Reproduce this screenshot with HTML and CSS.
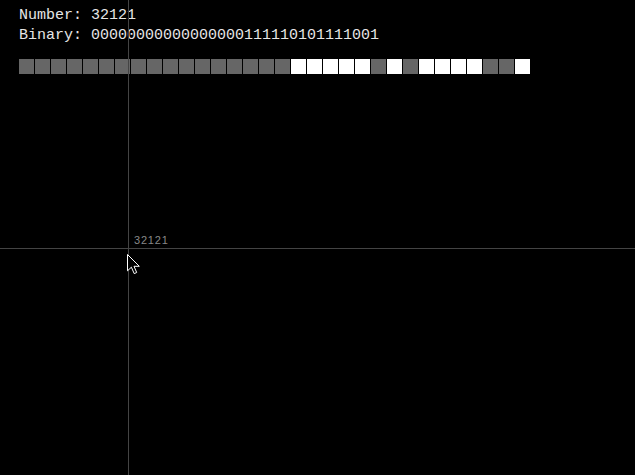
FILE: index.html
```html
<!DOCTYPE html>
<html>
<head>
<meta charset="utf-8">
<link rel="stylesheet" href="styles.css">
</head>
<body>
<div class="panel">
  <div class="line">Number: 32121</div>
  <div class="line">Binary: 00000000000000000111110101111001</div>
  <div class="bits">
    <span class="bit"></span><span class="bit"></span><span class="bit"></span><span class="bit"></span>
    <span class="bit"></span><span class="bit"></span><span class="bit"></span><span class="bit"></span>
    <span class="bit"></span><span class="bit"></span><span class="bit"></span><span class="bit"></span>
    <span class="bit"></span><span class="bit"></span><span class="bit"></span><span class="bit"></span>
    <span class="bit"></span><span class="bit on"></span><span class="bit on"></span><span class="bit on"></span>
    <span class="bit on"></span><span class="bit on"></span><span class="bit"></span><span class="bit on"></span>
    <span class="bit"></span><span class="bit on"></span><span class="bit on"></span><span class="bit on"></span>
    <span class="bit on"></span><span class="bit"></span><span class="bit"></span><span class="bit on"></span>
  </div>
</div>
<div class="vline"></div>
<div class="hline"></div>
<div class="tag">32121</div>
<svg class="cursor" width="14" height="21" viewBox="0 0 14 21">
  <path d="M0.5 0.5 L0.5 16.8 L4.4 13.2 L7.2 19.6 L9.7 18.5 L7 12.3 L12.3 12.3 Z" fill="#000" stroke="#fff" stroke-width="1" stroke-linejoin="miter"/>
</svg>
</body>
</html>
```
FILE: styles.css
```css
html, body {
  margin: 0;
  padding: 0;
  background: #000;
  width: 635px;
  height: 475px;
  overflow: hidden;
}
.panel {
  padding: 6px 19px 0;
  font-family: "Liberation Mono", "Courier New", monospace;
  font-size: 15px;
  color: #e6e6e6;
}
.line {
  line-height: 20px;
}
.bits {
  display: flex;
  gap: 1px;
  margin-top: 13px;
}
.bit {
  width: 15px;
  height: 15px;
  background: #666;
}
.bit.on {
  background: #fff;
}
.vline {
  position: absolute;
  left: 128px;
  top: 0;
  width: 1px;
  height: 475px;
  background: #444;
}
.hline {
  position: absolute;
  left: 0;
  top: 248px;
  width: 635px;
  height: 1px;
  background: #444;
}
.tag {
  position: absolute;
  left: 134px;
  top: 234px;
  font-family: "Liberation Sans", sans-serif;
  font-size: 11px;
  color: #888;
  letter-spacing: 0.8px;
}
.cursor {
  position: absolute;
  left: 127px;
  top: 254px;
}
```
